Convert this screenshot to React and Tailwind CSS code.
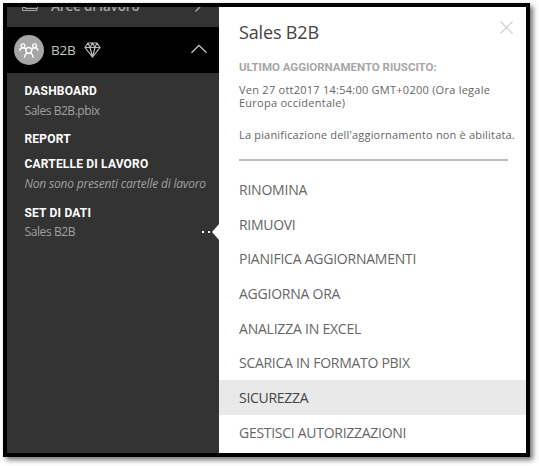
const actions = [
  ["RINOMINA", "tracking-[-0.22px]"],
  ["RIMUOVI", "tracking-[-0.3px]"],
  ["PIANIFICA AGGIORNAMENTI", "tracking-[-0.24px]"],
  ["AGGIORNA ORA", "tracking-[-0.24px]"],
  ["ANALIZZA IN EXCEL", "tracking-[-0.22px]"],
  ["SCARICA IN FORMATO PBIX", "tracking-[-0.28px]"],
  ["SICUREZZA", "tracking-[-0.28px]"],
  ["GESTISCI AUTORIZZAZIONI", "tracking-[-0.28px]"],
];

function Heading({ children }) {
  return (
    <h2 className="h-5 font-['Roboto',sans-serif] text-[12px] leading-5 font-bold tracking-[0.18px] text-white">
      {children}
    </h2>
  );
}

function PeopleIcon() {
  return (
    <svg width="30" height="30" viewBox="0 0 30 30" fill="none" stroke="#fff" strokeWidth="1.4">
      <circle cx="15" cy="15" r="15" fill="#a6a6a6" stroke="none" />
      <circle cx="9" cy="10.8" r="1.9" />
      <circle cx="20.6" cy="10.8" r="1.9" />
      <circle cx="14.8" cy="15.4" r="2.9" />
      <path d="M5.7 15.8c.2-1.9 1.4-3 3.2-3 1.5 0 2.5.7 3.1 1.8M23.9 15.8c-.2-1.9-1.4-3-3.2-3-1.5 0-2.5.7-3.1 1.8M10.4 22.6c.2-2.2 1.1-3.6 2.5-4.4M19.2 22.6c-.2-2.2-1.1-3.6-2.5-4.4" />
    </svg>
  );
}

function Sidebar() {
  return (
    <nav className="flex w-[212px] shrink-0 flex-col bg-[#333]">
      <div className="flex h-5 items-start overflow-hidden text-[#a6a6a6]">
        <svg className="ml-3.5" width="18" height="5" viewBox="0 0 18 5" fill="none" stroke="currentColor">
          <path d="M4.5 0v1.5h12V0M4.5.5h-3v3H16V1" />
        </svg>
        <span className="-mt-[11px] ml-3 w-[144px] text-[13.5px] leading-5 font-semibold tracking-[-0.15px] whitespace-nowrap">Aree di lavoro</span>
        <svg width="8" height="6" viewBox="0 0 8 6" fill="none" stroke="currentColor" strokeWidth="1.4">
          <path d="M.5 4.5 5 0" />
        </svg>
      </div>
      <div className="flex h-[46px] items-center bg-black pl-[7px]">
        <PeopleIcon />
        <span className="ml-[7px] w-[33px] text-[13.5px] leading-5 tracking-[-0.2px] text-[#c4c4c4]">B2B</span>
        <svg width="17" height="16" viewBox="0 0 17 16" fill="none" stroke="#b8b8b8" strokeWidth="1.2">
          <path d="M4 1h9l3 4.5-7.5 9.5L1 5.5zM1 5.5h15M6 5.5 8.5 15 11 5.5M4 1l2 4.5L8.5 1 11 5.5 13 1" />
        </svg>
        <svg className="mr-[11px] mb-0.5 ml-auto" width="18" height="10" viewBox="0 0 18 10" fill="none" stroke="#c8c8c8" strokeWidth="1.3">
          <path d="m1.5 8.8 7.5-7.5 7.5 7.5" />
        </svg>
      </div>
      <div className="flex flex-col pt-2 pl-[17.5px] text-[12px] leading-5 text-[#a0a0a0]">
        <Heading>DASHBOARD</Heading>
        <p className="h-[28px] leading-[19px] tracking-[-0.45px]">Sales B2B.pbix</p>
        <Heading>REPORT</Heading>
        <div className="h-[5px]" />
        <Heading>CARTELLE DI LAVORO</Heading>
        <p className="h-[29px] leading-[19px] tracking-[-0.2px] whitespace-nowrap italic">Non sono presenti cartelle di lavoro</p>
        <Heading>SET DI DATI</Heading>
        <div className="flex h-[18px] items-center">
          <p className="flex-1 tracking-[-0.4px]">Sales B2B</p>
          <div className="mr-[2px] flex gap-1">
            <i className="size-0.5 bg-white" />
            <i className="size-0.5 bg-white" />
          </div>
          <svg width="7" height="16" viewBox="0 0 7 16" fill="#fff">
            <path d="M7 0v16L0 8z" />
          </svg>
        </div>
      </div>
    </nav>
  );
}

export default function App() {
  return (
    <div className="h-[466px] w-[539px] overflow-hidden bg-white pt-[3px] pl-[3px] font-['Open_Sans',sans-serif]">
      <div className="flex h-[454px] w-[527px] overflow-hidden border-4 border-black bg-white shadow-[3px_3px_5px_rgba(0,0,0,0.55)]">
        <Sidebar />
        <main className="flex min-w-0 flex-1 flex-col text-[#666]">
          <div className="flex h-[46px] items-start justify-between pt-[13px] pr-[13px] pl-5">
            <h1 className="text-[18px] leading-6 tracking-[-0.16px] whitespace-nowrap text-[#444]">Sales B2B</h1>
            <svg className="mt-px" width="13" height="13" viewBox="0 0 13 13" stroke="#ccc" strokeWidth="1.1">
              <path d="m.5.5 12 12m0-12-12 12" />
            </svg>
          </div>
          <h2 className="h-[31px] pt-1 pl-5 font-['Roboto',sans-serif] text-[11.5px] leading-5 font-bold tracking-[-0.02px] text-[#a6a6a6]">
            ULTIMO AGGIORNAMENTO RIUSCITO:
          </h2>
          <p className="h-[45px] pl-5 text-[11px] leading-[12.5px] tracking-[0.25px] whitespace-nowrap">
            Ven 27 ott2017 14:54:00 GMT+0200 (Ora legale
            <br />
            Europa occidentale)
          </p>
          <p className="h-[30px] pl-5 text-[11px] leading-3 tracking-[0.18px] whitespace-nowrap">
            La pianificazione dell'aggiornamento non è abilitata.
          </p>
          <hr className="mr-[18px] ml-5 h-0 border-t-2 border-[#bbb]" />
          <ul className="mt-[11px]">
            {actions.map(([label, tracking]) => (
              <li
                key={label}
                className={`flex h-[34.7px] items-center pl-5 text-[14px] whitespace-nowrap ${tracking} ${
                  label === "SICUREZZA" ? "bg-[#e9e9e9] text-[#444]" : ""
                }`}
              >
                {label}
              </li>
            ))}
          </ul>
        </main>
      </div>
    </div>
  );
}
